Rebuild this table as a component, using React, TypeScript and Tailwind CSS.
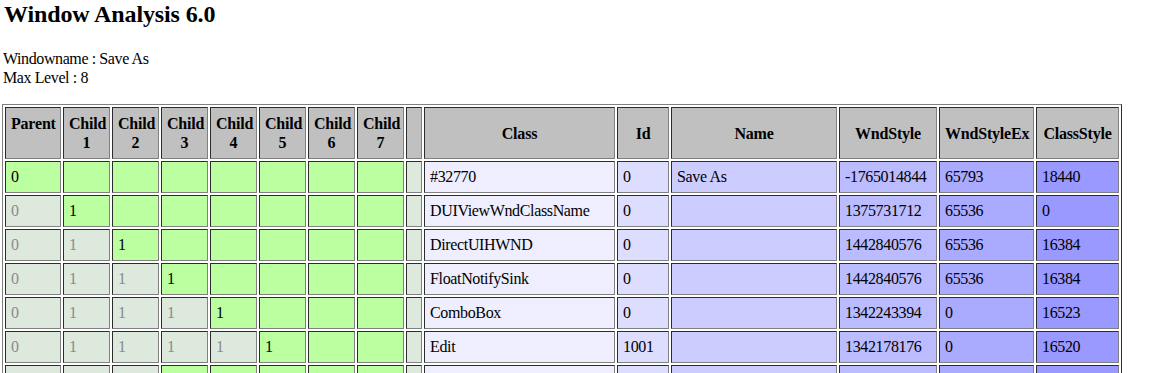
const HEADERS = [
  { label: "Parent", w: "w-[56px]", top: true },
  { label: "Child 1", w: "w-[47px]" },
  { label: "Child 2", w: "w-[47px]" },
  { label: "Child 3", w: "w-[47px]" },
  { label: "Child 4", w: "w-[47px]" },
  { label: "Child 5", w: "w-[47px]" },
  { label: "Child 6", w: "w-[47px]" },
  { label: "Child 7", w: "w-[47px]" },
  { label: "", w: "w-[16px]" },
  { label: "Class", w: "w-[191px]" },
  { label: "Id", w: "w-[52px]" },
  { label: "Name", w: "w-[166px]" },
  { label: "WndStyle", w: "w-[98px]" },
  { label: "WndStyleEx", w: "w-[95px]" },
  { label: "ClassStyle", w: "w-[83px]" },
];

// level = depth in the window tree; columns before it are greyed out
const ROWS = [
  { level: 0, cls: "#32770", id: "0", name: "Save As", style: "-1765014844", ex: "65793", cs: "18440" },
  { level: 1, cls: "DUIViewWndClassName", id: "0", name: "", style: "1375731712", ex: "65536", cs: "0" },
  { level: 2, cls: "DirectUIHWND", id: "0", name: "", style: "1442840576", ex: "65536", cs: "16384" },
  { level: 3, cls: "FloatNotifySink", id: "0", name: "", style: "1442840576", ex: "65536", cs: "16384" },
  { level: 4, cls: "ComboBox", id: "0", name: "", style: "1342243394", ex: "0", cs: "16523" },
  { level: 5, cls: "Edit", id: "1001", name: "", style: "1342178176", ex: "0", cs: "16520" },
  { level: 3, cls: "FloatNotifySink", id: "0", name: "", style: "1442840576", ex: "65536", cs: "16384" },
];

const cell =
  "h-[32px] border border-[#808080] [border-style:inset] px-[5px] py-0 align-middle text-left tracking-[-0.35px]";

export default function App() {
  return (
    <div className="min-h-screen bg-white px-[2px] text-[16px] text-black [font-family:'Liberation_Serif',serif]">
      <h1 className="m-0 pl-[2px] text-[24px] leading-[28px] font-bold tracking-[-0.12px]">Window Analysis 6.0</h1>
      <div className="mt-[21px] pl-[1px] leading-[19px] tracking-[-0.4px]">
        <div>Windowname : Save As</div>
        <div>Max Level : 8</div>
      </div>
      <table className="mt-[17px] w-[1120px] table-fixed border-separate border-spacing-[2px] border border-[#808080] [border-style:outset]">
        <thead>
          <tr>
            {HEADERS.map((h, i) => (
              <th
                key={i}
                className={`${h.w} h-[52px] border border-[#808080] bg-[#c0c0c0] px-[5px] font-bold tracking-[-0.2px] [border-style:inset] ${
                  h.top ? "pt-[6px] align-top" : "py-0 align-middle"
                } text-center leading-[19px]`}
              >
                {h.label}
              </th>
            ))}
          </tr>
        </thead>
        <tbody>
          {ROWS.map((r, ri) => (
            <tr key={ri}>
              {Array.from({ length: 8 }).map((_, c) => {
                if (c < r.level)
                  return (
                    <td key={c} className={`${cell} bg-[#dde9dd] text-[#8a8a8a]`}>
                      {c === 0 ? "0" : "1"}
                    </td>
                  );
                if (c === r.level)
                  return (
                    <td key={c} className={`${cell} bg-[#bbffa0]`}>
                      {c === 0 ? "0" : "1"}
                    </td>
                  );
                return <td key={c} className={`${cell} bg-[#bbffa0]`} />;
              })}
              <td className={`${cell} bg-[#dde9dd]`} />
              <td className={`${cell} bg-[#eeeeff]`}>{r.cls}</td>
              <td className={`${cell} bg-[#ddddff]`}>{r.id}</td>
              <td className={`${cell} bg-[#ccccff]`}>{r.name}</td>
              <td className={`${cell} bg-[#bbbbff]`}>{r.style}</td>
              <td className={`${cell} bg-[#aaaaff]`}>{r.ex}</td>
              <td className={`${cell} bg-[#9999ff]`}>{r.cs}</td>
            </tr>
          ))}
        </tbody>
      </table>
    </div>
  );
}
